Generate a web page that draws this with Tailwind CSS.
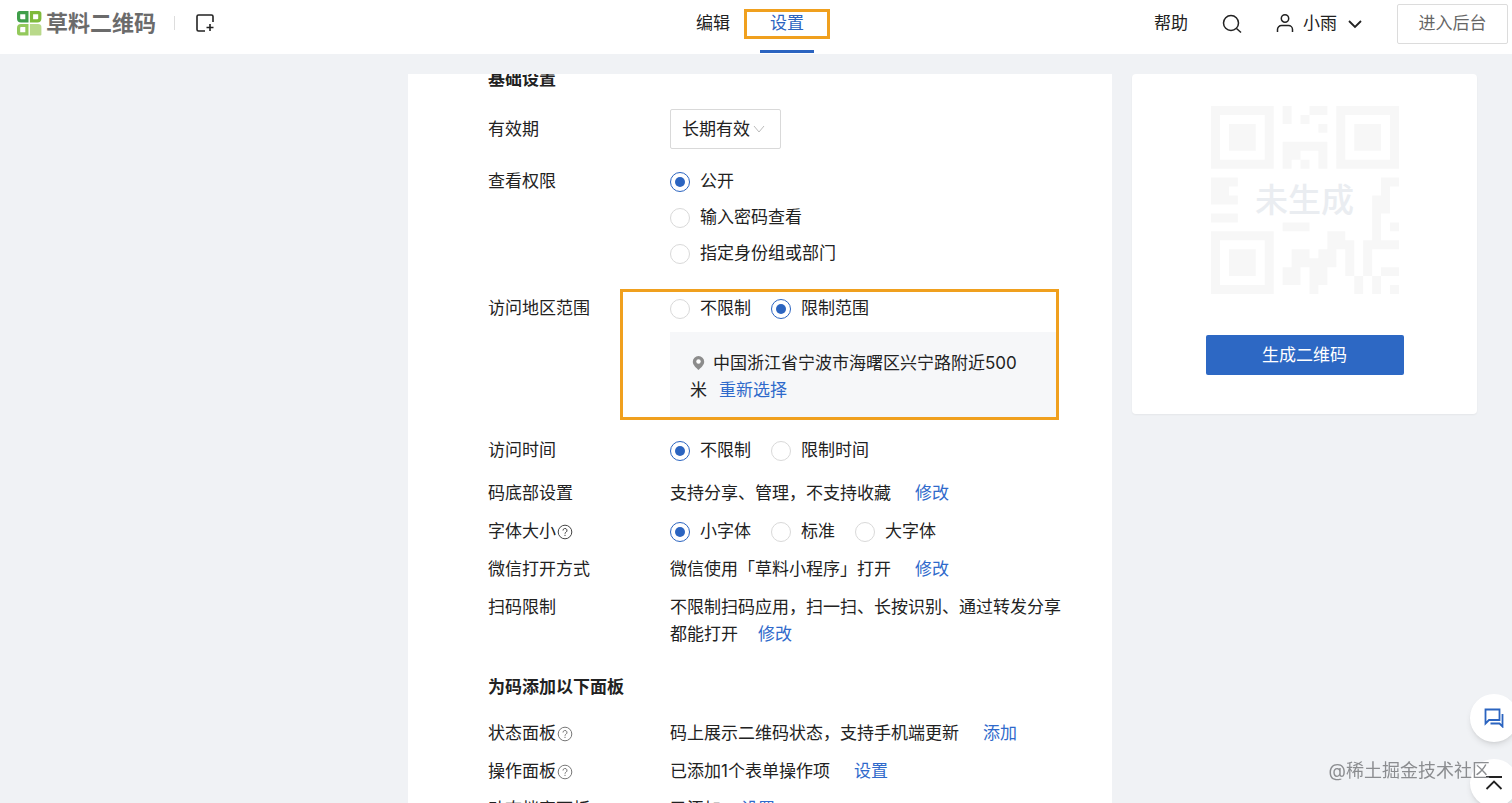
<!DOCTYPE html>
<html lang="zh-CN">
<head>
    <meta charset="UTF-8">
    <meta name="viewport" content="width=device-width, initial-scale=1.0">
    <title>草料二维码 - 设置</title>
    <script src="https://cdn.jsdelivr.net/npm/@tailwindcss/browser@4"></script>
</head>
<body class="h-screen overflow-hidden flex flex-col bg-[#f0f2f5] text-[17px] leading-[27px] text-[#222] font-['Inter','Noto_Sans_CJK_SC',sans-serif]">
    <header class="h-[54px] shrink-0 bg-white grid grid-cols-[1fr_auto_1fr] pl-4 pr-1">
        <div class="flex items-center pb-2">
            <a href="#" class="flex items-center gap-1 text-[22px] font-bold text-[#6b6b6b]">
                <svg class="size-[26px]" viewBox="0 0 26 26" fill="none" stroke-width="3.200">
                    <path d="M3.600 2.600h7.300v8.300H5Q2.600 10.900 2.600 8.500v-4.900q0-1 1-1z" stroke="#3f9e4a"/>
                    <path d="M15.500 2.600h7.300q1 0 1 1V8.500q0 2.400-2.400 2.400h-5.900z" stroke="#7fba3c"/>
                    <path d="M5 15.500h5.900v8.300H3.600q-1 0-1-1V18q0-2.500 2.400-2.500z" stroke="#93c95b"/>
                    <path d="M13.900 13.900H22q3.400 0 3.400 3V24.400q0 1-1 1H13.900z" fill="#b9d98a"/>
                </svg>
                草料二维码
            </a>
            <span class="ml-[18px] w-px h-[14px] bg-[#ddd]"></span>
            <button type="button" aria-label="新建" class="ml-5">
                <svg class="size-5" viewBox="0 0 20 20" fill="none" stroke="#222" stroke-width="1.600">
                    <path d="M10 18H3.500a1.500 1.500 0 0 1-1.500-1.500V3.500A1.500 1.500 0 0 1 3.500 2h13A1.500 1.500 0 0 1 18 3.500V9M15 11v7M11.500 14.500h7"/>
                </svg>
            </button>
        </div>
        <nav class="flex gap-5 pr-6 text-center">
            <a href="#" class="w-[54px] pt-[10px]">编辑</a>
            <a href="#" class="relative w-[54px] pt-[10px] mb-px border-b-3 border-[#2b64c0] text-[#2b64c0]">
                设置
                <span class="absolute -inset-x-4 top-[9px] h-[30px] border-3 border-[#f0a01e]"></span>
            </a>
        </nav>
        <div class="flex items-center justify-end pb-[7px]">
            <a href="#">帮助</a>
            <button type="button" aria-label="搜索" class="ml-[34px]">
                <svg class="size-5" viewBox="0 0 20 20" fill="none" stroke="#222" stroke-width="1.500">
                    <circle cx="9" cy="9" r="7.500"/>
                    <path d="M14.500 14.500l4.500 4"/>
                </svg>
            </button>
            <button type="button" class="ml-[34px] flex items-center">
                <svg class="w-[18px] h-5 mr-[9px]" viewBox="0 0 18 20" fill="none" stroke="#222" stroke-width="1.500">
                    <circle cx="9" cy="4.500" r="3.700"/>
                    <path d="M1.500 18v-2.500a4 4 0 0 1 4-4h7a4 4 0 0 1 4 4V18"/>
                </svg>
                小雨
                <svg class="w-4 h-[10px] ml-[10px]" viewBox="0 0 16 10" fill="none" stroke="#222" stroke-width="1.800">
                    <path d="M2 2l6 6 6-6"/>
                </svg>
            </button>
            <button type="button" class="ml-[34px] w-[111px] h-10 border border-[#dcdcdc] rounded-xs text-[#666]">进入后台</button>
        </div>
    </header>

    <main class="flex-1 min-h-0 flex justify-end items-start gap-5 pt-5 pr-[35px]">
        <section class="w-[704px] h-full overflow-hidden bg-white px-20">
            <h2 class="-mt-2 font-bold">基础设置</h2>
            <div class="mt-4 flex items-center">
                <label for="expire" class="w-[182px] shrink-0">有效期</label>
                <div class="relative">
                    <select id="expire" class="appearance-none w-[111px] h-10 pl-[11px] border border-[#d9d9d9] rounded-xs bg-white">
                        <option>长期有效</option>
                    </select>
                    <svg class="absolute right-4 top-4 w-3 h-2 pointer-events-none" viewBox="0 0 12 8" fill="none" stroke="#bbb">
                        <path d="M1 1l5 6 5-6"/>
                    </svg>
                </div>
            </div>
            <div class="mt-[19px] flex" role="radiogroup" aria-labelledby="l-perm">
                <div id="l-perm" class="w-[182px] shrink-0">查看权限</div>
                <div class="flex flex-col gap-[9px]">
                    <label class="flex items-center gap-[10px]"><input type="radio" name="perm" checked class="appearance-none size-5 rounded-full border border-[#d9d9d9] grid place-content-center checked:border-[#2b64c0] checked:before:content-[''] checked:before:size-[10px] checked:before:rounded-full checked:before:bg-[#2b64c0]">公开</label>
                    <label class="flex items-center gap-[10px]"><input type="radio" name="perm" class="appearance-none size-5 rounded-full border border-[#d9d9d9] grid place-content-center checked:border-[#2b64c0] checked:before:content-[''] checked:before:size-[10px] checked:before:rounded-full checked:before:bg-[#2b64c0]">输入密码查看</label>
                    <label class="flex items-center gap-[10px]"><input type="radio" name="perm" class="appearance-none size-5 rounded-full border border-[#d9d9d9] grid place-content-center checked:border-[#2b64c0] checked:before:content-[''] checked:before:size-[10px] checked:before:rounded-full checked:before:bg-[#2b64c0]">指定身份组或部门</label>
                </div>
            </div>
            <div class="mt-7 flex" role="radiogroup" aria-labelledby="l-area">
                <div id="l-area" class="w-[182px] shrink-0">访问地区范围</div>
                <div class="relative w-[388px] shrink-0">
                    <div class="flex gap-5">
                        <label class="flex items-center gap-[10px]"><input type="radio" name="area" class="appearance-none size-5 rounded-full border border-[#d9d9d9] grid place-content-center checked:border-[#2b64c0] checked:before:content-[''] checked:before:size-[10px] checked:before:rounded-full checked:before:bg-[#2b64c0]">不限制</label>
                        <label class="flex items-center gap-[10px]"><input type="radio" name="area" checked class="appearance-none size-5 rounded-full border border-[#d9d9d9] grid place-content-center checked:border-[#2b64c0] checked:before:content-[''] checked:before:size-[10px] checked:before:rounded-full checked:before:bg-[#2b64c0]">限制范围</label>
                    </div>
                    <div class="mt-[10px] bg-[#f6f7f9] pt-[18px] pb-[13px] pl-5 pr-8">
                        <svg class="inline-block align-[-1px] w-[13px] h-[14px] ml-[2px] mr-2" viewBox="0 0 13 14">
                            <path d="M6.500 0a5.700 5.700 0 0 1 5.700 5.700C12.200 9 8.500 12 6.500 14 4.500 12 .8 9 .8 5.700A5.700 5.700 0 0 1 6.500 0z" fill="#8c8c8c"/>
                            <circle cx="6.500" cy="5.500" r="2.200" fill="#fff"/>
                        </svg>中国浙江省宁波市海曙区兴宁路附近500米<a href="#" class="ml-3 text-[#2f6acb]">重新选择</a>
                    </div>
                    <span class="absolute -left-[50px] -right-px -top-[6px] -bottom-[3px] border-3 border-[#f0a01e] pointer-events-none"></span>
                </div>
            </div>
            <div class="mt-5 flex" role="radiogroup" aria-labelledby="l-time">
                <div id="l-time" class="w-[182px] shrink-0">访问时间</div>
                <div class="flex gap-5">
                    <label class="flex items-center gap-[10px]"><input type="radio" name="time" checked class="appearance-none size-5 rounded-full border border-[#d9d9d9] grid place-content-center checked:border-[#2b64c0] checked:before:content-[''] checked:before:size-[10px] checked:before:rounded-full checked:before:bg-[#2b64c0]">不限制</label>
                    <label class="flex items-center gap-[10px]"><input type="radio" name="time" class="appearance-none size-5 rounded-full border border-[#d9d9d9] grid place-content-center checked:border-[#2b64c0] checked:before:content-[''] checked:before:size-[10px] checked:before:rounded-full checked:before:bg-[#2b64c0]">限制时间</label>
                </div>
            </div>
            <div class="mt-4 flex">
                <div class="w-[182px] shrink-0">码底部设置</div>
                <div>支持分享、管理，不支持收藏<a href="#" class="ml-6 text-[#2f6acb]">修改</a></div>
            </div>
            <div class="mt-[11px] flex" role="radiogroup" aria-labelledby="l-size">
                <div id="l-size" class="w-[182px] shrink-0 flex items-center">字体大小<svg class="size-4 ml-px" viewBox="0 0 16 16" fill="none" stroke="#444"><circle cx="8" cy="8" r="6.800"/><path d="M6 6.500a2 2 0 1 1 3 1.700q-1 .5-1 1.500M8 10.800v1.200"/></svg></div>
                <div class="flex gap-5">
                    <label class="flex items-center gap-[10px]"><input type="radio" name="size" checked class="appearance-none size-5 rounded-full border border-[#d9d9d9] grid place-content-center checked:border-[#2b64c0] checked:before:content-[''] checked:before:size-[10px] checked:before:rounded-full checked:before:bg-[#2b64c0]">小字体</label>
                    <label class="flex items-center gap-[10px]"><input type="radio" name="size" class="appearance-none size-5 rounded-full border border-[#d9d9d9] grid place-content-center checked:border-[#2b64c0] checked:before:content-[''] checked:before:size-[10px] checked:before:rounded-full checked:before:bg-[#2b64c0]">标准</label>
                    <label class="flex items-center gap-[10px]"><input type="radio" name="size" class="appearance-none size-5 rounded-full border border-[#d9d9d9] grid place-content-center checked:border-[#2b64c0] checked:before:content-[''] checked:before:size-[10px] checked:before:rounded-full checked:before:bg-[#2b64c0]">大字体</label>
                </div>
            </div>
            <div class="mt-[11px] flex">
                <div class="w-[182px] shrink-0">微信打开方式</div>
                <div>微信使用「草料小程序」打开<a href="#" class="ml-6 text-[#2f6acb]">修改</a></div>
            </div>
            <div class="mt-[11px] flex">
                <div class="w-[182px] shrink-0">扫码限制</div>
                <div class="w-[402px] -mr-10">不限制扫码应用，扫一扫、长按识别、通过转发分享都能打开<a href="#" class="ml-5 text-[#2f6acb]">修改</a></div>
            </div>

            <h2 class="mt-[26px] font-bold">为码添加以下面板</h2>
            <div class="mt-[19px] flex">
                <div class="w-[182px] shrink-0 flex items-center">状态面板<svg class="size-4 ml-px" viewBox="0 0 16 16" fill="none" stroke="#777"><circle cx="8" cy="8" r="6.800"/><path d="M6 6.500a2 2 0 1 1 3 1.700q-1 .5-1 1.500M8 10.800v1.200"/></svg></div>
                <div>码上展示二维码状态，支持手机端更新<a href="#" class="ml-6 text-[#2f6acb]">添加</a></div>
            </div>
            <div class="mt-[11px] flex">
                <div class="w-[182px] shrink-0 flex items-center">操作面板<svg class="size-4 ml-px" viewBox="0 0 16 16" fill="none" stroke="#777"><circle cx="8" cy="8" r="6.800"/><path d="M6 6.500a2 2 0 1 1 3 1.700q-1 .5-1 1.500M8 10.800v1.200"/></svg></div>
                <div>已添加1个表单操作项<a href="#" class="ml-6 text-[#2f6acb]">设置</a></div>
            </div>
            <div class="mt-[11px] flex">
                <div class="w-[182px] shrink-0">动态档案面板</div>
                <div>已添加<a href="#" class="ml-5 text-[#2f6acb]">设置</a></div>
            </div>
        </section>

        <aside class="w-[345px] bg-white rounded-sm shadow-xs pt-8 pb-[39px] flex flex-col items-center">
            <div class="relative">
                <svg class="size-[188px]" viewBox="0 0 21 21" fill="#f7f7f7">
                    <!-- finder patterns -->
                    <path fill-rule="evenodd" d="M0 0h7v7H0zM1 1v5h5V1zM2 2h3v3H2z"/>
                    <path fill-rule="evenodd" d="M14 0h7v7h-7zM15 1v5h5V1zM16 2h3v3h-3z"/>
                    <path fill-rule="evenodd" d="M0 14h7v7H0zM1 15v5h5v-5zM2 16h3v3H2z"/>
                    <!-- modules -->
                    <path d="M8 0h1v2H8zM10 1h1v1h-1zM11 0h2v1h-2zM12 2h1v1h-1zM8 4h5v1H8zM8 5h2v1H8zM8 6h1v1H8zM10 6h1v1h-1zM12 5h1v2h-1z"/>
                    <path d="M0 8h3v1H0zM0 9h2v1H0zM0 10h3v1H0zM0 12h3v1H0z"/>
                    <path d="M19 8h2v1h-2zM19 9h1v1h-1zM18 10h2v2h-2zM18 12h1v3h-1zM20 13h1v1h-1zM17 15h4v1h-4zM17 16h1v3h-1z"/>
                    <path d="M8 13h3v1H8zM13 14h2v1h-2zM13 15h3v1h-3zM15 16h1v3h-1zM9 16h2v1H9zM12 16h2v1h-2zM9 17h5v1H9zM8 18h2v2H8zM11 18h2v2h-2zM11 20h1v1h-1z"/>
                    <path d="M16 19h1v2h-1zM18 19h1v2h-1zM19 18h2v1h-2zM20 20h1v1h-1z"/>
                </svg>
                <span class="absolute inset-0 flex items-center justify-center text-[33px] font-medium text-[#eaedf1]">未生成</span>
            </div>
            <button type="button" class="mt-[41px] w-[198px] h-10 rounded-xs bg-[#2d68c4] text-white">生成二维码</button>
        </aside>
    </main>

    <div class="fixed -right-[6px] -bottom-1 flex flex-col gap-[17px]">
        <button type="button" aria-label="客服" class="size-12 rounded-full bg-white shadow-md flex items-center justify-center">
            <svg class="size-5" viewBox="0 0 20 20" fill="none" stroke="#2b64c0" stroke-width="1.800">
                <path d="M1.500 1.500h14v10.500H5l-3.500 3.500z"/>
                <path d="M18.500 6v12.500L15.500 15.500H6.500"/>
            </svg>
        </button>
        <button type="button" aria-label="回到顶部" class="size-12 rounded-full bg-white shadow-md flex items-center justify-center">
            <svg class="w-[18px] h-[14px]" viewBox="0 0 18 14" fill="none" stroke="#222" stroke-width="1.800">
                <path d="M1 1h16M1.500 13l7.500-7.500 7.500 7.500"/>
            </svg>
        </button>
    </div>
    <div class="fixed right-[22px] bottom-[19px] text-[18px] text-[#8b8d90] pointer-events-none">@稀土掘金技术社区</div>
</body>
</html>
